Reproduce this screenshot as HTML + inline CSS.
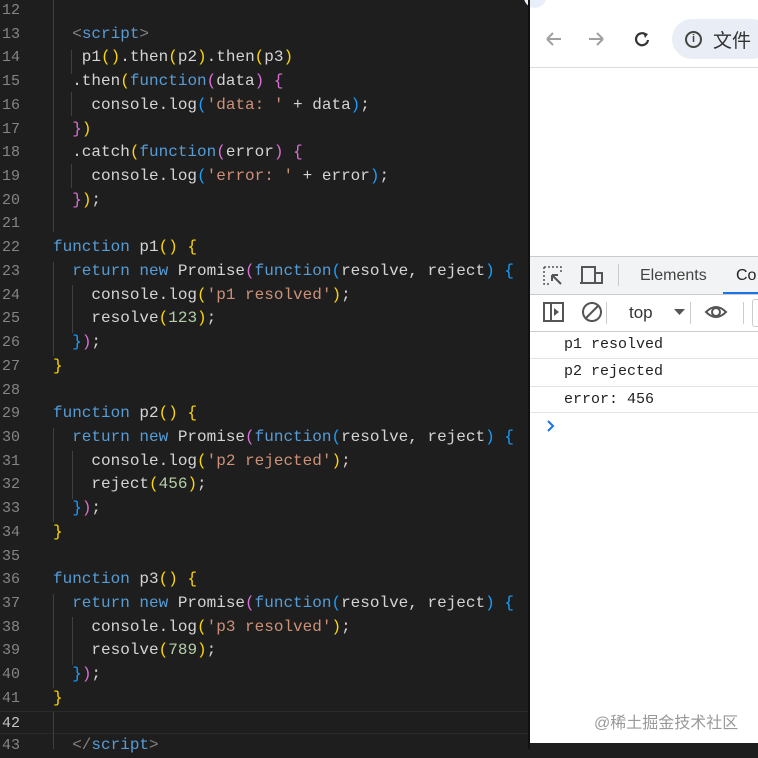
<!DOCTYPE html>
<html><head><meta charset="utf-8"><style>
body{margin:0;width:758px;height:749px;overflow:hidden;background:#1e1e1e;position:relative;font-family:"Liberation Mono",monospace}
.ed{position:absolute;left:0;top:-1px;width:530px}
.l{height:23.73px;line-height:23.73px;font-size:16px;color:#d4d4d4;white-space:pre;position:relative}
.n{position:absolute;left:0;width:20px;text-align:right;color:#858585;font-size:15px}
.c{position:absolute;left:53px}
.k{color:#569cd6}.s{color:#ce9178}.d{color:#b5cea8}.y{color:#ffd700}.p{color:#da70d6}.b{color:#179fff}.t{color:#808080}
.g{position:absolute;width:1px;background:#404040}
.br{position:absolute;left:530px;top:0;width:228px;height:743px;background:#fff;font-family:"Liberation Sans",sans-serif}
</style></head><body>
<div class="ed">
<div class="l"><span class="n">12</span></div>
<div class="l"><span class="n">13</span><span class="c">  <span class="t">&lt;</span><span class="k">script</span><span class="t">&gt;</span></span></div>
<div class="l"><span class="n">14</span><span class="c">   p1<span class="y">()</span>.then<span class="y">(</span>p2<span class="y">)</span>.then<span class="y">(</span>p3<span class="y">)</span></span></div>
<div class="l"><span class="n">15</span><span class="c">  .then<span class="y">(</span><span class="k">function</span><span class="p">(</span>data<span class="p">)</span> <span class="p">{</span></span></div>
<div class="l"><span class="n">16</span><span class="c">    console.log<span class="b">(</span><span class="s">'data: '</span> + data<span class="b">)</span>;</span></div>
<div class="l"><span class="n">17</span><span class="c">  <span class="p">}</span><span class="y">)</span></span></div>
<div class="l"><span class="n">18</span><span class="c">  .catch<span class="y">(</span><span class="k">function</span><span class="p">(</span>error<span class="p">)</span> <span class="p">{</span></span></div>
<div class="l"><span class="n">19</span><span class="c">    console.log<span class="b">(</span><span class="s">'error: '</span> + error<span class="b">)</span>;</span></div>
<div class="l"><span class="n">20</span><span class="c">  <span class="p">}</span><span class="y">)</span>;</span></div>
<div class="l"><span class="n">21</span></div>
<div class="l"><span class="n">22</span><span class="c"><span class="k">function</span> p1<span class="y">()</span> <span class="y">{</span></span></div>
<div class="l"><span class="n">23</span><span class="c">  <span class="k">return new</span> Promise<span class="p">(</span><span class="k">function</span><span class="b">(</span>resolve, reject<span class="b">)</span> <span class="b">{</span></span></div>
<div class="l"><span class="n">24</span><span class="c">    console.log<span class="y">(</span><span class="s">'p1 resolved'</span><span class="y">)</span>;</span></div>
<div class="l"><span class="n">25</span><span class="c">    resolve<span class="y">(</span><span class="d">123</span><span class="y">)</span>;</span></div>
<div class="l"><span class="n">26</span><span class="c">  <span class="b">}</span><span class="p">)</span>;</span></div>
<div class="l"><span class="n">27</span><span class="c"><span class="y">}</span></span></div>
<div class="l"><span class="n">28</span></div>
<div class="l"><span class="n">29</span><span class="c"><span class="k">function</span> p2<span class="y">()</span> <span class="y">{</span></span></div>
<div class="l"><span class="n">30</span><span class="c">  <span class="k">return new</span> Promise<span class="p">(</span><span class="k">function</span><span class="b">(</span>resolve, reject<span class="b">)</span> <span class="b">{</span></span></div>
<div class="l"><span class="n">31</span><span class="c">    console.log<span class="y">(</span><span class="s">'p2 rejected'</span><span class="y">)</span>;</span></div>
<div class="l"><span class="n">32</span><span class="c">    reject<span class="y">(</span><span class="d">456</span><span class="y">)</span>;</span></div>
<div class="l"><span class="n">33</span><span class="c">  <span class="b">}</span><span class="p">)</span>;</span></div>
<div class="l"><span class="n">34</span><span class="c"><span class="y">}</span></span></div>
<div class="l"><span class="n">35</span></div>
<div class="l"><span class="n">36</span><span class="c"><span class="k">function</span> p3<span class="y">()</span> <span class="y">{</span></span></div>
<div class="l"><span class="n">37</span><span class="c">  <span class="k">return new</span> Promise<span class="p">(</span><span class="k">function</span><span class="b">(</span>resolve, reject<span class="b">)</span> <span class="b">{</span></span></div>
<div class="l"><span class="n">38</span><span class="c">    console.log<span class="y">(</span><span class="s">'p3 resolved'</span><span class="y">)</span>;</span></div>
<div class="l"><span class="n">39</span><span class="c">    resolve<span class="y">(</span><span class="d">789</span><span class="y">)</span>;</span></div>
<div class="l"><span class="n">40</span><span class="c">  <span class="b">}</span><span class="p">)</span>;</span></div>
<div class="l"><span class="n">41</span><span class="c"><span class="y">}</span></span></div>
<div class="l" style="border-top:1px solid #2a2a2a;border-bottom:1px solid #2a2a2a;box-sizing:border-box"><span class="n" style="color:#c6c6c6">42</span></div>
<div class="l"><span class="n">43</span><span class="c">  <span class="t">&lt;/</span><span class="k">script</span><span class="t">&gt;</span></span></div>
</div>
<div class="g" style="left:53px;top:0;height:232px"></div>
<div class="g" style="left:71px;top:50px;height:24px"></div>
<div class="g" style="left:71px;top:92px;height:24px"></div>
<div class="g" style="left:71px;top:164px;height:24px"></div>
<div class="g" style="left:53px;top:262px;height:94px"></div>
<div class="g" style="left:72px;top:285px;height:48px"></div>
<div class="g" style="left:53px;top:428px;height:94px"></div>
<div class="g" style="left:72px;top:451px;height:48px"></div>
<div class="g" style="left:53px;top:594px;height:94px"></div>
<div class="g" style="left:72px;top:617px;height:48px"></div>
<div class="g" style="left:53px;top:712px;height:37px"></div>

<div class="br">
<div style="position:absolute;left:-6px;top:-14px;width:22px;height:22px;border-radius:50%;background:#e8eefa"></div>
<svg style="position:absolute;left:14px;top:30px" width="110" height="18" viewBox="0 0 110 18">
<path d="M3 9H17M3 9L9 3M3 9L9 15" stroke="#a0a0a0" stroke-width="2" fill="none"/>
<path d="M45 9H59M59 9L53 3M59 9L53 15" stroke="#a0a0a0" stroke-width="2" fill="none"/>
<path d="M101 4A6 6 0 1 0 104 10" stroke="#333" stroke-width="2.2" fill="none"/><path d="M99 2L104 4L101 8Z" fill="#333"/>
</svg>
<div style="position:absolute;left:142px;top:19px;width:100px;height:40px;border-radius:20px;background:#e9eef6"></div>
<div style="position:absolute;left:155px;top:31px;width:13px;height:13px;border:2px solid #444;border-radius:50%;font-size:11px;line-height:13px;text-align:center;font-weight:bold;color:#444">i</div>
<div style="position:absolute;left:183px;top:26px;font-size:19px;color:#333;font-family:'Liberation Sans','Noto Sans CJK SC',sans-serif">文件</div>
<div style="position:absolute;left:0;top:67px;width:228px;height:1px;background:#dadce0"></div>
<div style="position:absolute;left:0;top:256px;width:228px;height:38px;background:#f1f3f4;border-top:1px solid #ccc"></div>
<svg style="position:absolute;left:12px;top:265px" width="64" height="22" viewBox="0 0 64 22">
<path d="M2 2H19V8M2 2V19H8" stroke="#555" stroke-width="1.5" stroke-dasharray="2 2" fill="none"/><path d="M10 10L19 19M10 10H16M10 10V16" stroke="#555" stroke-width="2" fill="none"/>
<rect x="40" y="2" width="13" height="16" fill="none" stroke="#555" stroke-width="2"/><rect x="53" y="8" width="7" height="10" fill="none" stroke="#555" stroke-width="2"/><path d="M38 18H46" stroke="#555" stroke-width="2"/>
</svg>
<div style="position:absolute;left:88px;top:264px;width:1px;height:22px;background:#ccc"></div>
<div style="position:absolute;left:110px;top:267px;font-size:16px;color:#444">Elements</div>
<div style="position:absolute;left:206px;top:267px;font-size:16px;color:#222">Co</div>
<div style="position:absolute;left:193px;top:292px;width:35px;height:2px;background:#1a73e8"></div>
<div style="position:absolute;left:0;top:294px;width:228px;height:36px;background:#fff;border-top:1px solid #ccc;border-bottom:1px solid #ccc"></div>
<svg style="position:absolute;left:12px;top:300px" width="220" height="26" viewBox="0 0 220 26">
<rect x="2" y="3" width="19" height="18" fill="none" stroke="#555" stroke-width="2"/><path d="M9 3V21" stroke="#555" stroke-width="2"/><path d="M12 8L17 12L12 16Z" fill="#555"/>
<circle cx="50" cy="12" r="9" fill="none" stroke="#555" stroke-width="2"/><path d="M44 18L56 6" stroke="#555" stroke-width="2"/>
<path d="M132 9H143L137.5 15Z" fill="#555"/>
<path d="M164 12Q174 2 184 12Q174 22 164 12Z" fill="none" stroke="#555" stroke-width="2"/><circle cx="174" cy="12" r="4" fill="none" stroke="#555" stroke-width="2"/>
</svg>
<div style="position:absolute;left:76px;top:302px;width:1px;height:22px;background:#ccc"></div>
<div style="position:absolute;left:160px;top:302px;width:1px;height:22px;background:#ccc"></div>
<div style="position:absolute;left:213px;top:302px;width:1px;height:22px;background:#ccc"></div>
<div style="position:absolute;left:222px;top:299px;width:8px;height:26px;border:1px solid #ccc;border-radius:3px"></div>
<div style="position:absolute;left:99px;top:303px;font-size:17px;color:#333">top</div>
<div style="font-family:'Liberation Mono',monospace;font-size:15px;color:#222">
<div style="position:absolute;left:34px;top:336px">p1 resolved</div>
<div style="position:absolute;left:0;top:358px;width:228px;height:1px;background:#e4e4e4"></div>
<div style="position:absolute;left:34px;top:363px">p2 rejected</div>
<div style="position:absolute;left:0;top:386px;width:228px;height:1px;background:#e4e4e4"></div>
<div style="position:absolute;left:34px;top:391px">error: 456</div>
<div style="position:absolute;left:0;top:412px;width:228px;height:1px;background:#e4e4e4"></div>
</div>
<svg style="position:absolute;left:16px;top:420px" width="10" height="12"><path d="M2 1L7 6L2 11" stroke="#1a73e8" stroke-width="2" fill="none"/></svg>
<div style="position:absolute;left:64px;top:709px;font-size:16px;color:#999;font-family:'Liberation Sans','Noto Sans CJK SC',sans-serif">@稀土掘金技术社区</div>
</div>
<div style="position:absolute;left:528px;top:0;width:2px;height:749px;background:#111"></div>
<div style="position:absolute;left:530px;top:743px;width:228px;height:6px;background:#1e1e1e"></div>
</body></html>
